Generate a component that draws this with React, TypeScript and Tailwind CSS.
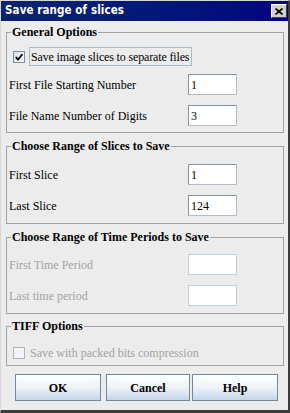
import React from 'react';

const serif = "font-['Liberation_Serif','Times_New_Roman',serif]";

function Checkbox({ checked, disabled }: { checked?: boolean; disabled?: boolean }) {
  return (
    <span
      className={
        disabled
          ? 'w-[12px] h-[12px] border border-[#aab4c0] bg-[#f3f4f6] flex items-center justify-center'
          : 'w-[12px] h-[12px] border border-[#7c8ea3] bg-gradient-to-br from-[#d9e1ea] to-[#f6f8fb] flex items-center justify-center'
      }
    >
      {checked && (
        <svg width="10" height="10" viewBox="0 0 10 10">
          <path d="M1.8 5.2 L4 7.6 L8.4 2.2" fill="none" stroke="#000" strokeWidth="1.8" />
        </svg>
      )}
    </span>
  );
}

function Field({
  label,
  value,
  disabled,
  className
}: {
  label: string;
  value?: string;
  disabled?: boolean;
  className?: string;
}) {
  return (
    <div className={`flex items-center ${className ?? ''}`}>
      <span className={`w-[179px] shrink-0 whitespace-nowrap text-[12px] leading-[14px] ${disabled ? 'text-[#a3a3a3]' : 'text-black'}`}>
        {label}
      </span>
      <div
        className={
          disabled
            ? 'w-[49px] h-[21px] border border-[#bcd0e4] bg-white'
            : 'w-[49px] h-[21px] border border-[#8693a2] border-r-[#b4bcc6] border-b-[#b4bcc6] bg-white pl-[2px] flex items-center text-[12px] text-black'
        }
      >
        {value}
      </div>
    </div>
  );
}

function Group({
  title,
  className,
  children
}: {
  title: string;
  className?: string;
  children: React.ReactNode;
}) {
  return (
    <fieldset className={`border border-[#a3a3a3] px-[2px] ${className ?? ''}`}>
      <legend className="ml-[2px] px-[1px] text-[12px] leading-[14px] font-bold text-black">{title}</legend>
      {children}
    </fieldset>
  );
}

function DialogButton({ label, width }: { label: string; width: string }) {
  return (
    <button
      type="button"
      className={`${width} h-[27px] border border-[#73879f] bg-gradient-to-b from-white via-[#eef3f9] to-[#c4d6ea] text-[12px] font-bold text-black`}
    >
      {label}
    </button>
  );
}

export default function App() {
  return (
    <div
      className={`w-[290px] h-[413px] flex flex-col bg-[#ececec] border-l border-t border-[#d6d6d6] border-r-2 border-b-[3px] border-r-[#3c3c3c] border-b-[#3c3c3c] ${serif}`}
    >
      <div className="h-[20px] shrink-0 flex items-center pl-[4px] pr-[1px] bg-gradient-to-r from-[#0a2470] to-[#03037e]">
        <span className="font-['DejaVu_Sans_Condensed','Liberation_Sans',sans-serif] font-bold text-[11.5px] text-white tracking-[0.1px]">
          Save range of slices
        </span>
        <button
          type="button"
          className="ml-auto w-[16px] h-[14px] bg-[#d4d0c8] border border-t-white border-l-white border-r-[#404040] border-b-[#404040] flex items-center justify-center"
        >
          <svg width="8" height="7" viewBox="0 0 8 7">
            <path d="M0.5 0.5 L7.5 6.5 M7.5 0.5 L0.5 6.5" stroke="#000" strokeWidth="1.6" />
          </svg>
        </button>
      </div>

      <div className="flex flex-col pl-[5px] pr-[4px] pt-[4px]">
        <Group title="General Options" className="pb-[6px]">
          <div className="mt-[8px] h-[19px] flex items-center">
            <span className="ml-[4px]">
              <Checkbox checked />
            </span>
            <span className="ml-[4px] w-[163px] h-[19px] border border-[#a7bbd0] pl-[1px] flex items-center whitespace-nowrap text-[12px] tracking-[-0.15px] text-black">
              Save image slices to separate files
            </span>
          </div>
          <Field label="First File Starting Number" value="1" className="mt-[8px]" />
          <Field label="File Name Number of Digits" value="3" className="mt-[10px]" />
        </Group>

        <Group title="Choose Range of Slices to Save" className="mt-[6px] pb-[7px]">
          <Field label="First Slice" value="1" className="mt-[11px]" />
          <Field label="Last Slice" value="124" className="mt-[10px]" />
        </Group>

        <Group title="Choose Range of Time Periods to Save" className="mt-[6px] pb-[7px]">
          <Field label="First Time Period" disabled className="mt-[10px]" />
          <Field label="Last time period" disabled className="mt-[10px]" />
        </Group>

        <Group title="TIFF Options" className="mt-[5px] pb-[3px]">
          <div className="mt-[10px] h-[19px] flex items-center">
            <span className="ml-[4px]">
              <Checkbox disabled />
            </span>
            <span className="ml-[5px] whitespace-nowrap text-[12px] text-[#a3a3a3]">Save with packed bits compression</span>
          </div>
        </Group>

        <div className="mt-[8px] ml-[9px] flex">
          <DialogButton label="OK" width="w-[86px]" />
          <div className="ml-[5px]">
            <DialogButton label="Cancel" width="w-[84px]" />
          </div>
          <div className="ml-[2px]">
            <DialogButton label="Help" width="w-[86px]" />
          </div>
        </div>
      </div>
    </div>
  );
}
